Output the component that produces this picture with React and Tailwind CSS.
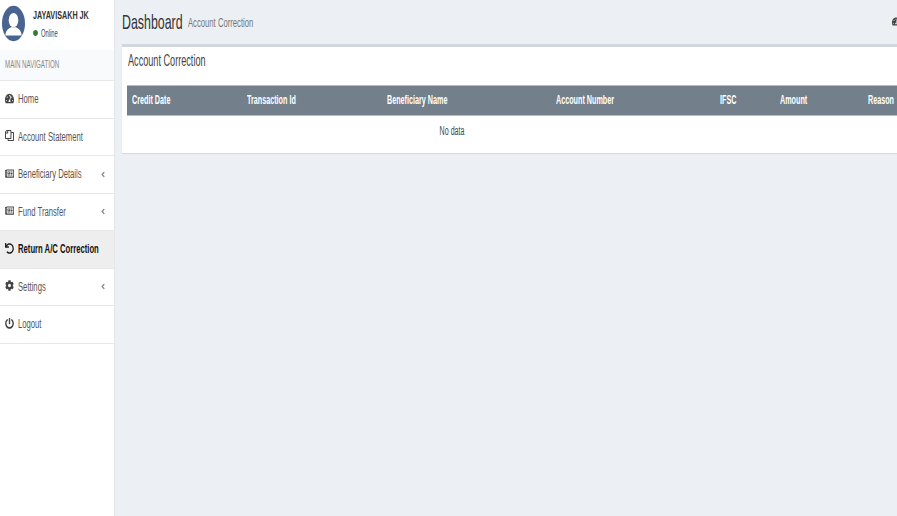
import { FaTachometerAlt, FaRegCopy, FaRegNewspaper, FaUndo, FaCog, FaPowerOff, FaAngleLeft, FaCircle } from 'react-icons/fa';

const navItems = [
  { icon: FaTachometerAlt, label: 'Home' },
  { icon: FaRegCopy, label: 'Account Statement', flip: true },
  { icon: FaRegNewspaper, label: 'Beneficiary Details', arrow: true },
  { icon: FaRegNewspaper, label: 'Fund Transfer', arrow: true },
  { icon: FaUndo, label: 'Return A/C Correction', active: true },
  { icon: FaCog, label: 'Settings', arrow: true },
  { icon: FaPowerOff, label: 'Logout' },
];

const columns = [
  { label: 'Credit Date', width: 'w-[115px]' },
  { label: 'Transaction Id', width: 'w-[140px]' },
  { label: 'Beneficiary Name', width: 'w-[169px]' },
  { label: 'Account Number', width: 'w-[164px]' },
  { label: 'IFSC', width: 'w-[60px]' },
  { label: 'Amount', width: 'w-[88px]' },
  { label: 'Reason', width: 'w-[100px]' },
];

// the whole page is squeezed horizontally in the reference
const Narrow = ({ children, className = '' }) => (
  <span className={`inline-block whitespace-nowrap ${className}`}>{children}</span>
);

const NavRow = ({ icon: Icon, label, arrow, active, flip }) => (
  <div className={`flex h-[37.5px] items-center border-b border-[#e6e8ec] pb-[2px] pl-[5px] ${active ? 'bg-[#eeeeee] text-[#111111]' : 'text-[#555555]'}`}>
    <Icon className={`h-[11px] w-[9px] shrink-0 ${flip ? '-scale-x-100' : ''} ${active ? 'text-[#222222]' : 'text-[#444444]'}`} preserveAspectRatio="none" />
    <div className="ml-1 w-[83px] shrink-0 overflow-visible">
      <Narrow className={`origin-left scale-x-[0.64] text-xs ${active ? 'font-bold' : ''}`}>{label}</Narrow>
    </div>
    {arrow && <FaAngleLeft className="mt-[2px] h-[9px] w-[4px] shrink-0 text-[#888888]" preserveAspectRatio="none" />}
  </div>
);

const App = () => {
  return (
    <div className="flex h-[516px] w-[897px] overflow-hidden bg-[#ecf0f5] font-['Liberation_Sans',Arial,sans-serif]">
      <aside className="h-full w-[115px] shrink-0 border-r border-[#e3e6eb] bg-white">
        <div className="flex h-[50px] items-start">
          <svg viewBox="0 0 24 37" className="ml-[2px] mt-[5px] h-[37px] w-[23px] shrink-0">
            <ellipse cx="12" cy="18.5" rx="12" ry="18.5" fill="#4a6491" />
            <ellipse cx="12" cy="15" rx="5" ry="7.5" fill="#ffffff" />
            <path d="M3.5 31 C4 25 7 24 9.5 22.5 L14.5 22.5 C17 24 20 25 20.5 31 Z" fill="#ffffff" />
          </svg>
          <div className="ml-2 min-w-0">
            <div className="mt-[7px] h-[14px] leading-[14px]">
              <Narrow className="origin-left scale-x-[0.655] text-[11px] font-bold text-[#333333]">JAYAVISAKH JK</Narrow>
            </div>
            <div className="mt-[6px] flex h-3 items-center">
              <FaCircle className="h-[6px] w-[5px] shrink-0 text-[#2f7d32]" preserveAspectRatio="none" />
              <Narrow className="ml-[3px] origin-left scale-x-[0.58] text-[10px] text-[#444444]">Online</Narrow>
            </div>
          </div>
        </div>
        <div className="flex h-[31px] items-center border-b border-[#e6e8ec] bg-[#f9fafc] pb-[2px] pl-[5px]">
          <Narrow className="origin-left scale-x-[0.56] text-[11px] text-[#888888]">MAIN NAVIGATION</Narrow>
        </div>
        {navItems.map((item) => (
          <NavRow key={item.label} {...item} />
        ))}
      </aside>

      <main className="w-[850px] shrink-0 pl-[7px]">
        <div className="flex h-[44px] items-center pb-[2px]">
          <Narrow className="w-[66px] origin-left scale-x-[0.59] text-[21px] leading-none text-[#333333]">Dashboard</Narrow>
          <Narrow className="mt-1 w-[100px] origin-left scale-x-[0.64] text-xs text-[#777777]">Account Correction</Narrow>
          <FaTachometerAlt className="ml-auto mr-[65px] h-[9px] w-[8px] shrink-0 text-[#444444]" preserveAspectRatio="none" />
        </div>
        <section className="h-[109px] border-t-[3px] border-[#d2d6de] bg-white pl-[5px] shadow-[0_1px_1px_rgba(0,0,0,0.08)]">
          <div className="flex h-[38px] items-center pb-[10px] pl-[1px]">
            <Narrow className="origin-left scale-x-[0.57] text-base text-[#444444]">Account Correction</Narrow>
          </div>
          <table className="table-fixed border-collapse">
            <thead>
              <tr className="h-[30px] border-y border-[#b5bcc4] bg-[#737f8a] text-left text-white">
                {columns.map((col) => (
                  <th key={col.label} className={`${col.width} p-0 pb-[3px] pl-[5px]`}>
                    <Narrow className="origin-left scale-x-[0.6] text-xs font-bold">{col.label}</Narrow>
                  </th>
                ))}
              </tr>
            </thead>
            <tbody>
              <tr className="h-[33px]">
                <td colSpan={5} className="p-0 pb-[5px] pl-[3px] text-center">
                  <Narrow className="origin-center scale-x-[0.59] text-xs text-[#444444]">No data</Narrow>
                </td>
              </tr>
            </tbody>
          </table>
        </section>
      </main>
    </div>
  );
};

export default App;
